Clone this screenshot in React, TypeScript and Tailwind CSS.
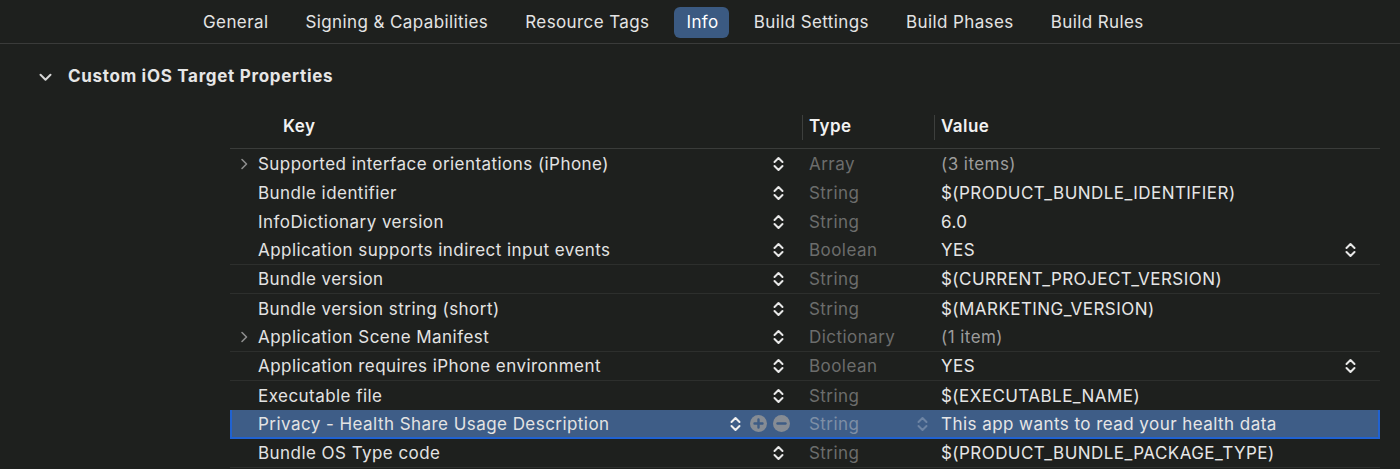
import React from 'react';

type Row = {
  key: string;
  type: string;
  value: string;
  expandable?: boolean;
  dimValue?: boolean;
  popup?: boolean;
  selected?: boolean;
  line?: boolean;
};

const ROWS: Row[] = [
  { key: 'Supported interface orientations (iPhone)', type: 'Array', value: '(3 items)', expandable: true, dimValue: true },
  { key: 'Bundle identifier', type: 'String', value: '$(PRODUCT_BUNDLE_IDENTIFIER)' },
  { key: 'InfoDictionary version', type: 'String', value: '6.0' },
  { key: 'Application supports indirect input events', type: 'Boolean', value: 'YES', popup: true, line: true },
  { key: 'Bundle version', type: 'String', value: '$(CURRENT_PROJECT_VERSION)', line: true },
  { key: 'Bundle version string (short)', type: 'String', value: '$(MARKETING_VERSION)' },
  { key: 'Application Scene Manifest', type: 'Dictionary', value: '(1 item)', expandable: true, dimValue: true, line: true },
  { key: 'Application requires iPhone environment', type: 'Boolean', value: 'YES', popup: true, line: true },
  { key: 'Executable file', type: 'String', value: '$(EXECUTABLE_NAME)' },
  { key: 'Privacy - Health Share Usage Description', type: 'String', value: 'This app wants to read your health data', selected: true },
  { key: 'Bundle OS Type code', type: 'String', value: '$(PRODUCT_BUNDLE_PACKAGE_TYPE)', line: true },
];

const TABS = ['General', 'Signing & Capabilities', 'Resource Tags', 'Info', 'Build Settings', 'Build Phases', 'Build Rules'];

function Stepper({ className }: { className?: string }) {
  return (
    <svg width="11" height="18" viewBox="0 0 11 18" fill="none" className={className}>
      <path
        d="M1.5 7 5.5 3l4 4M1.5 11l4 4 4-4"
        stroke="currentColor"
        strokeWidth="2"
        strokeLinecap="round"
        strokeLinejoin="round"
      />
    </svg>
  );
}

function RoundButton({ minus }: { minus?: boolean }) {
  return (
    <svg width="17" height="17" viewBox="0 0 17 17">
      <circle cx="8.5" cy="8.5" r="8.5" fill="#868c94" />
      <path d={minus ? 'M4.5 8.5h8' : 'M4.5 8.5h8M8.5 4.5v8'} stroke="#3e5c85" strokeWidth="2.4" strokeLinecap="round" />
    </svg>
  );
}

export default function App() {
  return (
    <div className="w-[1400px] h-[469px] overflow-hidden bg-[#1e201e] text-[#e3e3e3] font-['Inter','Noto_Sans',sans-serif] text-[17px]">
      {/* Editor tabs */}
      <div className="h-[44px] border-b border-[#3a3b3a] flex items-center gap-[13px] pl-[191px] pt-[1px]">
        {TABS.map(t => (
          <div
            key={t}
            className={[
              'h-[31px] flex items-center rounded-md tracking-[0.4px] pt-[2px]',
              t === 'Info' ? 'bg-[#3b5a82] text-white pl-3 pr-[10px]' : 'text-[#e4e4e4] px-3',
            ].join(' ')}
          >
            {t}
          </div>
        ))}
      </div>

      {/* Section header */}
      <div className="h-[64px] flex items-center pl-[39px] gap-4 pt-[2px]">
        <svg width="13" height="9" viewBox="0 0 13 9" fill="none">
          <path d="M1.5 1.8 6.5 6.8l5-5" stroke="#d6d6d6" strokeWidth="2" strokeLinecap="round" strokeLinejoin="round" />
        </svg>
        <span className="font-bold text-[#e6e6e6] tracking-[0.7px]">Custom iOS Target Properties</span>
      </div>

      {/* Property list */}
      <div className="ml-[230px] w-[1150px] tracking-[0.45px]">
        <div className="h-[41px] border-b border-[#3a3c3a] flex items-center pb-[2px] font-semibold text-[#f2f2f2]">
          <div className="w-[572px] pl-[53px]">Key</div>
          <div className="w-[132px] flex items-center">
            <span className="h-[25px] border-l border-[#3d3f3d] mr-[6px]" />
            Type
          </div>
          <div className="flex-1 flex items-center">
            <span className="h-[25px] border-l border-[#3d3f3d] mr-[6px]" />
            Value
          </div>
        </div>

        {ROWS.map(r => (
          <div
            key={r.key}
            className={[
              'h-[29px] flex items-center',
              r.selected
                ? 'bg-[#3e5d87] border-x-2 border-b-2 border-[#2062d2]'
                : r.line
                ? 'border-b border-[#2d2f2d]'
                : '',
            ].join(' ')}
          >
            <div
              className={[
                'flex items-center h-full',
                r.selected ? 'w-[570px] pl-[8px] pr-[12px]' : 'w-[572px] pl-[10px] pr-[18px]',
              ].join(' ')}
            >
              <span className="w-[18px] flex items-center">
                {r.expandable && (
                  <svg width="8" height="12" viewBox="0 0 8 12" fill="none">
                    <path d="M2 1.5 6.5 6 2 10.5" stroke="#8d8d8d" strokeWidth="1.6" strokeLinecap="round" strokeLinejoin="round" />
                  </svg>
                )}
              </span>
              <span className="flex-1 whitespace-nowrap pt-[2px]">{r.key}</span>
              {r.selected ? (
                <div className="flex items-center gap-[6px]">
                  <Stepper className="text-[#f0f0f0] mr-[3px]" />
                  <RoundButton />
                  <RoundButton minus />
                </div>
              ) : (
                <Stepper className="text-[#e8e8e8]" />
              )}
            </div>
            <div className="w-[132px] flex items-center pl-[7px] pr-[6px] h-full">
              <span className={['flex-1 pt-[2px]', r.selected ? 'text-[#7e8fa6]' : 'text-[#6c6d6c]'].join(' ')}>{r.type}</span>
              {r.selected && <Stepper className="text-[#6d84a4]" />}
            </div>
            <div className="flex-1 flex items-center pl-[7px] pr-[24px] h-full">
              <span className={['flex-1 whitespace-nowrap pt-[2px]', r.dimValue ? 'text-[#9c9c9c]' : 'text-[#e6e6e6]'].join(' ')}>
                {r.value}
              </span>
              {r.popup && <Stepper className="text-[#e8e8e8]" />}
            </div>
          </div>
        ))}
      </div>
    </div>
  );
}
